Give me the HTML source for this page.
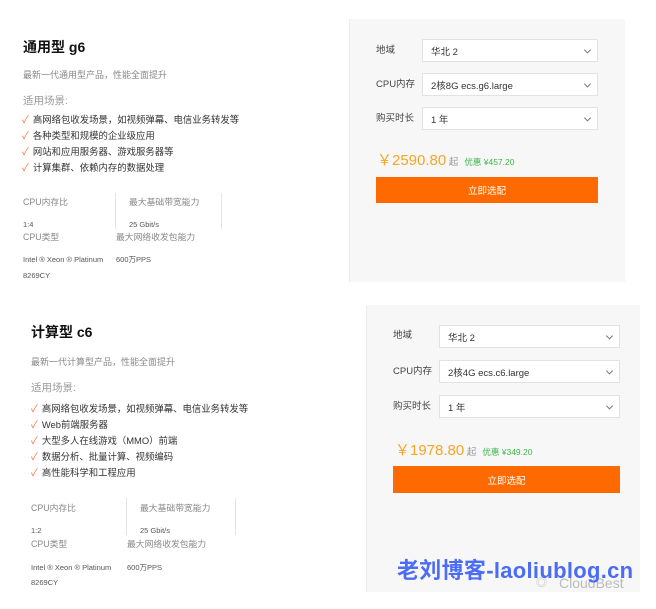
<!DOCTYPE html>
<html><head><meta charset="utf-8"><style>
*{margin:0;padding:0;box-sizing:border-box}
body{width:656px;height:609px;background:#fff;position:relative;overflow:hidden;font-family:"Liberation Sans","Noto Sans CJK SC",sans-serif;color:#333}
.a{position:absolute;white-space:nowrap;line-height:1}
.t{font-size:14px;font-weight:bold;color:#111}
.s{font-size:9px;color:#888}
.h{font-size:10.5px;color:#999}
.li{font-size:9.4px;color:#333}
.li b{color:#f5762a;font-weight:normal;margin-right:4px;font-size:10px}
.k{font-size:8.8px;color:#888}
.v{font-size:7.5px;color:#555}
.vl{position:absolute;width:1px;background:#e4e4e4}
.g{position:absolute;background:#f7f7f7;border-left:1px solid #ececec}
.sel{position:absolute;background:#fff;border:1px solid #e2e2e2;font-size:9.5px;color:#333;padding-left:8px;display:flex;align-items:center}
.sel i{position:absolute;right:7px;top:50%;width:5px;height:5px;border-right:1px solid #777;border-bottom:1px solid #777;transform:translateY(-70%) rotate(45deg)}
.lb{font-size:9.5px;color:#444}
.btn{position:absolute;background:#ff6a00;color:#fff;font-size:9.5px;display:flex;align-items:center;justify-content:center}
.p{font-size:15px;color:#f5a623}
.p small{font-size:9.5px;color:#999}
.p em{font-style:normal;font-size:8.5px;color:#3ab54a;margin-left:6px}
</style></head><body>
<div class="a t" style="left:23px;top:40px">通用型 g6</div>
<div class="a s" style="left:23px;top:71px">最新一代通用型产品，性能全面提升</div>
<div class="a h" style="left:23px;top:96px">适用场景:</div>
<div class="a li" style="left:22px;top:115px"><b>✓</b>高网络包收发场景，如视频弹幕、电信业务转发等</div>
<div class="a li" style="left:22px;top:131px"><b>✓</b>各种类型和规模的企业级应用</div>
<div class="a li" style="left:22px;top:147px"><b>✓</b>网站和应用服务器、游戏服务器等</div>
<div class="a li" style="left:22px;top:163px"><b>✓</b>计算集群、依赖内存的数据处理</div>
<div class="a k" style="left:23px;top:198px">CPU内存比</div>
<div class="a k" style="left:129px;top:198px">最大基础带宽能力</div>
<div class="vl" style="left:115px;top:193px;height:36px"></div>
<div class="vl" style="left:221px;top:193px;height:36px"></div>
<div class="a v" style="left:23px;top:221px">1:4</div>
<div class="a v" style="left:129px;top:221px">25 Gbit/s</div>
<div class="a k" style="left:23px;top:233px">CPU类型</div>
<div class="a k" style="left:116px;top:233px">最大网络收发包能力</div>
<div class="a v" style="left:23px;top:256px">Intel ® Xeon ® Platinum</div>
<div class="a v" style="left:116px;top:256px">600万PPS</div>
<div class="a v" style="left:23px;top:272px">8269CY</div>

<div class="g" style="left:349px;top:19px;width:276px;height:263px"></div>
<div class="a lb" style="left:376px;top:46px">地域</div>
<div class="sel" style="left:422px;top:39px;width:176px;height:23px">华北 2<i></i></div>
<div class="a lb" style="left:376px;top:80px">CPU内存</div>
<div class="sel" style="left:422px;top:73px;width:176px;height:23px">2核8G ecs.g6.large<i></i></div>
<div class="a lb" style="left:376px;top:114px">购买时长</div>
<div class="sel" style="left:422px;top:107px;width:176px;height:23px">1 年<i></i></div>
<div class="a p" style="left:377px;top:153px">￥2590.80<small> 起</small><em>优惠 ¥457.20</em></div>
<div class="btn" style="left:376px;top:177px;width:222px;height:26px">立即选配</div>

<div class="a t" style="left:31px;top:325px">计算型 c6</div>
<div class="a s" style="left:31px;top:358px">最新一代计算型产品，性能全面提升</div>
<div class="a h" style="left:31px;top:383px">适用场景:</div>
<div class="a li" style="left:31px;top:404px"><b>✓</b>高网络包收发场景，如视频弹幕、电信业务转发等</div>
<div class="a li" style="left:31px;top:420px"><b>✓</b>Web前端服务器</div>
<div class="a li" style="left:31px;top:436px"><b>✓</b>大型多人在线游戏（MMO）前端</div>
<div class="a li" style="left:31px;top:452px"><b>✓</b>数据分析、批量计算、视频编码</div>
<div class="a li" style="left:31px;top:468px"><b>✓</b>高性能科学和工程应用</div>
<div class="a k" style="left:31px;top:504px">CPU内存比</div>
<div class="a k" style="left:140px;top:504px">最大基础带宽能力</div>
<div class="vl" style="left:126px;top:498px;height:37px"></div>
<div class="vl" style="left:235px;top:498px;height:37px"></div>
<div class="a v" style="left:31px;top:527px">1:2</div>
<div class="a v" style="left:140px;top:527px">25 Gbit/s</div>
<div class="a k" style="left:31px;top:540px">CPU类型</div>
<div class="a k" style="left:127px;top:540px">最大网络收发包能力</div>
<div class="a v" style="left:31px;top:564px">Intel ® Xeon ® Platinum</div>
<div class="a v" style="left:127px;top:564px">600万PPS</div>
<div class="a v" style="left:31px;top:579px">8269CY</div>

<div class="g" style="left:366px;top:305px;width:274px;height:287px"></div>
<div class="a lb" style="left:393px;top:331px">地域</div>
<div class="sel" style="left:439px;top:325px;width:181px;height:23px">华北 2<i></i></div>
<div class="a lb" style="left:393px;top:367px">CPU内存</div>
<div class="sel" style="left:439px;top:360px;width:181px;height:23px">2核4G ecs.c6.large<i></i></div>
<div class="a lb" style="left:393px;top:402px">购买时长</div>
<div class="sel" style="left:439px;top:395px;width:181px;height:23px">1 年<i></i></div>
<div class="a p" style="left:395px;top:443px">￥1978.80<small> 起</small><em>优惠 ¥349.20</em></div>
<div class="btn" style="left:393px;top:466px;width:227px;height:27px">立即选配</div>

<div class="a" style="left:536px;top:578px;font-size:11px;color:#bbb">◎</div>
<div class="a" style="left:559px;top:576px;font-size:14px;color:#bbb">CloudBest</div>
<div class="a" style="left:397px;top:560px;font-size:22px;font-weight:bold;color:#4a6cf7;letter-spacing:0.3px">老刘博客-laoliublog.cn</div>
</body></html>
